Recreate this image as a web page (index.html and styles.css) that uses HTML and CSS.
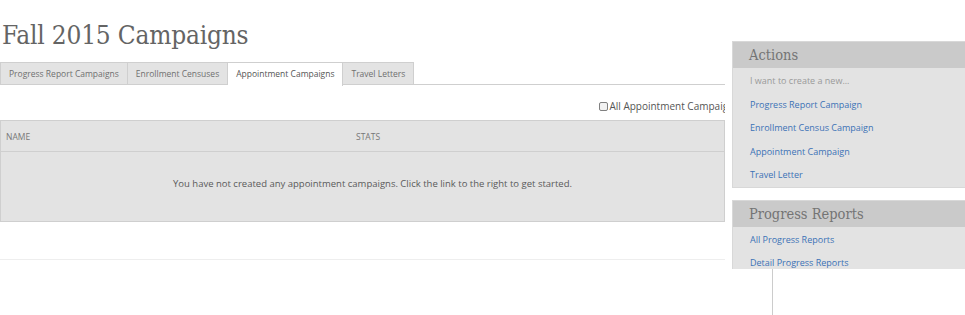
FILE: index.html
```html
<!DOCTYPE html>
<html lang="en">
<head>
    <meta charset="UTF-8">
    <title>Fall 2015 Campaigns</title>
    <link rel="stylesheet" href="styles.css">
</head>
<body>
    <div class="page">
        <div class="main">
            <h1 class="page-title">Fall 2015 Campaigns</h1>

            <ul class="tabs">
                <li class="tab">Progress Report Campaigns</li>
                <li class="tab">Enrollment Censuses</li>
                <li class="tab active">Appointment Campaigns</li>
                <li class="tab">Travel Letters</li>
            </ul>

            <div class="filter">
                <label><input type="checkbox" class="check">All Appointment Campaigns</label>
            </div>

            <table class="campaigns">
                <thead>
                    <tr>
                        <th class="col-name">Name</th>
                        <th>Stats</th>
                    </tr>
                </thead>
                <tbody>
                    <tr>
                        <td colspan="2" class="empty">You have not created any appointment campaigns. Click the link to the right to get started.</td>
                    </tr>
                </tbody>
            </table>

            <div class="divider"></div>
        </div>

        <div class="sidebar">
            <div class="panels">
                <div class="panel">
                    <h2 class="panel-title">Actions</h2>
                    <ul class="panel-list">
                        <li class="hint">I want to create a new...</li>
                        <li><a href="#">Progress Report Campaign</a></li>
                        <li><a href="#">Enrollment Census Campaign</a></li>
                        <li><a href="#">Appointment Campaign</a></li>
                        <li><a href="#">Travel Letter</a></li>
                    </ul>
                </div>
                <div class="panel">
                    <h2 class="panel-title">Progress Reports</h2>
                    <ul class="panel-list">
                        <li><a href="#">All Progress Reports</a></li>
                        <li><a href="#">Detail Progress Reports</a></li>
                    </ul>
                </div>
            </div>
            <div class="rail"></div>
        </div>
    </div>
</body>
</html>
```

FILE: styles.css
```css
:root {
    --panel-bg: #e3e3e3;
    --header-bg: #cacaca;
    --border: #cfcfcf;
    --text: #666666;
    --link: #3b72b6;
}

body {
    margin: 0;
    font-family: 'Open Sans', sans-serif;
    color: var(--text);
    background: #ffffff;
    overflow: hidden;
    height: 315px;
}

.page {
    display: flex;
    gap: 7px;
    width: 972px;
}

.main {
    width: 725px;
    overflow: hidden;
    flex-shrink: 0;
}

.page-title {
    font-family: 'DejaVu Serif', serif;
    font-stretch: condensed;
    font-weight: normal;
    font-size: 26px;
    line-height: 34px;
    color: #646464;
    margin: 18px 0 10px 2px;
    letter-spacing: -0.2px;
}

.tabs {
    list-style: none;
    margin: 0;
    padding: 0;
    display: flex;
    border-bottom: 1px solid var(--border);
    height: 22px;
}

.tab {
    font-size: 8.5px;
    line-height: 22px;
    padding: 0 8px;
    background: var(--panel-bg);
    border: 1px solid var(--border);
    border-left: none;
    border-bottom: none;
    color: #707070;
}

.tab:first-child {
    border-left: 1px solid var(--border);
}

.tab.active {
    background: #ffffff;
    color: #555555;
    height: 23px;
}

.filter {
    text-align: right;
    margin: 14px -14px 7px 0;
    font-size: 10px;
    line-height: 14px;
    color: #555555;
}

.check {
    appearance: none;
    width: 9px;
    height: 9px;
    margin: 0 1px 0 0;
    border: 1px solid #808080;
    border-radius: 2px;
    background: #f2f2f2;
    vertical-align: -1px;
}

.campaigns {
    width: 725px;
    border-collapse: collapse;
    background: var(--panel-bg);
    border: 1px solid var(--border);
}

.campaigns th {
    text-align: left;
    font-weight: normal;
    text-transform: uppercase;
    font-size: 8.5px;
    color: #777777;
    height: 30px;
    padding: 0 5px;
    border-bottom: 1px solid var(--border);
}

.col-name {
    width: 340px;
}

.empty {
    text-align: center;
    font-size: 9.5px;
    line-height: 14px;
    padding: 25px 0 30px 20px;
    color: #5a5a5a;
}

.divider {
    margin-top: 37px;
    border-top: 1px solid #eeeeee;
}

.sidebar {
    width: 240px;
    padding-top: 41px;
    flex-shrink: 0;
}

.panels {
    height: 228px;
    overflow: hidden;
}

.panel {
    background: var(--panel-bg);
    border: 1px solid #d8d8d8;
    border-right: none;
    margin-bottom: 12px;
}

.panel-title {
    font-family: 'DejaVu Serif', serif;
    font-stretch: condensed;
    font-weight: normal;
    font-size: 14.5px;
    line-height: 26px;
    margin: 0;
    padding: 0 16px;
    background: var(--header-bg);
    color: #747474;
}

.panel-list {
    list-style: none;
    margin: 0;
    padding: 1px 0 0 17px;
}

.panel-list li {
    font-size: 9px;
    line-height: 23.5px;
}

.panel-list a {
    color: var(--link);
    text-decoration: none;
}

.hint {
    color: #9a9a9a;
}

.rail {
    margin-left: 40px;
    width: 1px;
    height: 50px;
    background: #cccccc;
}
```
